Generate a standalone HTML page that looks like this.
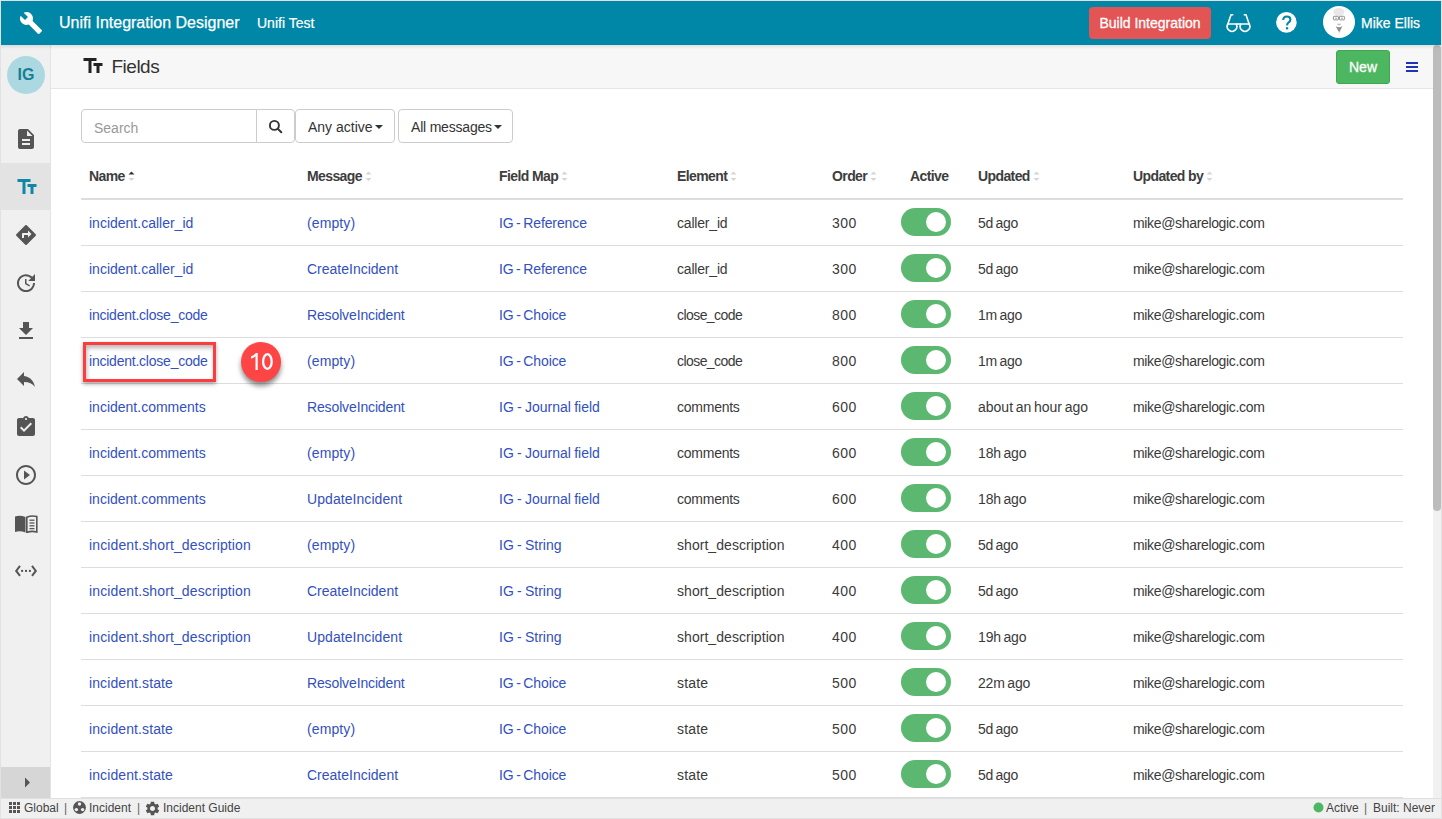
<!DOCTYPE html>
<html><head><meta charset="utf-8">
<style>
*{box-sizing:border-box;margin:0;padding:0}
html,body{width:1442px;height:819px;overflow:hidden;background:#fff}
body{font-family:"Liberation Sans",sans-serif;color:#333;position:relative}
.frame{position:absolute;left:0;top:0;width:1442px;height:819px;border:1px solid #e2e2e2;pointer-events:none;z-index:50}
.topbar{position:absolute;left:0;top:0;width:1442px;height:45px;background:#0086a6;color:#fff}
.topbar .t1{position:absolute;left:59px;top:14px;font-size:16px;line-height:18px;white-space:nowrap;-webkit-text-stroke:0.25px #fff}
.topbar .t2{position:absolute;left:257px;top:15px;font-size:14px;line-height:16px;white-space:nowrap;-webkit-text-stroke:0.2px #fff}
.btn-build{position:absolute;left:1089px;top:7px;width:122px;height:32px;background:#e35454;border-radius:4px;color:#fff;font-size:14px;line-height:32px;text-align:center;-webkit-text-stroke:0.3px #fff}
.uname{position:absolute;left:1361px;top:15px;font-size:14px;line-height:16px;white-space:nowrap;-webkit-text-stroke:0.25px #fff}
.shadow{position:absolute;left:0;top:45px;width:1442px;height:4px;background:linear-gradient(rgba(0,0,0,0.09),rgba(0,0,0,0));z-index:5}
.sidebar{position:absolute;left:0;top:45px;width:51px;height:753px;background:#f0f0f0;border-right:1px solid #e3e3e3}
.sidebar .act{position:absolute;left:0;top:118px;width:50px;height:47px;background:#e3e3e3}
.avatar{position:absolute;left:7px;top:11px;width:38px;height:38px;border-radius:50%;background:#acd9e1;color:#167f94;font-size:16px;font-weight:bold;text-align:center;line-height:38px}
.collapse{position:absolute;left:1px;top:767px;width:49px;height:31px;background:#d6d6d6}
.pagehead{position:absolute;left:51px;top:45px;width:1382px;height:44px;background:#f7f7f7;border-bottom:1px solid #e6e6e6}
.pagehead .title{position:absolute;left:60.5px;top:12px;font-size:19px;line-height:20px;letter-spacing:-0.5px;color:#333}
.btn-new{position:absolute;left:1336px;top:50px;width:54px;height:34px;background:#4cb760;border:1px solid #3da852;border-radius:3px;color:#fff;font-size:14px;line-height:32px;text-align:center;-webkit-text-stroke:0.3px #fff}
.statusbar{position:absolute;left:0;top:798px;width:1442px;height:21px;background:#f0f0f0;border-top:1px solid #e0e0e0;font-size:12px;color:#444}
.scroll{position:absolute;left:1433px;top:45px;width:8px;height:753px;background:#f1f1f1}
.thumb{position:absolute;left:0;top:0;width:8px;height:466px;background:#bcbcbc;border-radius:4px}
.search{position:absolute;left:81px;top:109px;width:176px;height:34px;border:1px solid #ccc;border-radius:4px 0 0 4px;font-size:14px;color:#999;padding-left:12px;line-height:36px}
.sbtn{position:absolute;left:256px;top:109px;width:39px;height:34px;border:1px solid #ccc;border-radius:0 4px 4px 0}
.dd{position:absolute;top:109px;height:34px;border:1px solid #ccc;border-radius:4px;font-size:14px;color:#333;line-height:34px;white-space:nowrap}
.caret{display:inline-block;width:0;height:0;border-left:4px solid transparent;border-right:4px solid transparent;border-top:4px solid #333;vertical-align:middle;margin-left:2px;margin-top:-2px}
table{position:absolute;left:81px;top:151px;width:1322px;border-collapse:collapse;font-size:14px}
th{height:48px;text-align:left;font-weight:bold;font-size:14px;letter-spacing:-0.6px;color:#3d3d3d;border-bottom:2px solid #ddd;padding:3px 0 0 8px;white-space:nowrap}
td{height:46px;border-bottom:1px solid #ddd;padding:1px 0 0 8px;white-space:nowrap;color:#3a3a3a}
td a{color:#3350c0;text-decoration:none}
.sort{display:inline-block;width:7px;height:11px;vertical-align:middle;margin-left:3px;position:relative;top:-1px}
.tog{display:inline-block;width:50px;height:28px;border-radius:14px;background:#5cb870;position:relative;top:-1px;vertical-align:middle}
.tog:after{content:"";position:absolute;right:5px;top:4px;width:20px;height:20px;border-radius:50%;background:#fff}
</style></head><body>
<div class="topbar">
  <div class="t1">Unifi Integration Designer</div>
  <div class="t2">Unifi Test</div>
  <div class="btn-build">Build Integration</div>
  <div class="uname">Mike Ellis</div>
</div>
<div class="shadow"></div>
<div class="sidebar">
  <div class="avatar">IG</div>
  <div class="act"></div>
</div>
<div class="collapse"></div>
<div class="pagehead"><div class="title">Fields</div></div>
<div class="btn-new">New</div>

<div class="search">Search</div>
<div class="sbtn"></div>
<div class="dd" style="left:295px;width:100px;padding-left:12px">Any active<span class="caret"></span></div>
<div class="dd" style="left:398px;width:115px;padding-left:12px;letter-spacing:-0.2px">All messages<span class="caret"></span></div>

<table>
<colgroup><col style="width:218px"><col style="width:192px"><col style="width:178px"><col style="width:155px"><col style="width:69px"><col style="width:77px"><col style="width:155px"><col></colgroup>
<thead><tr><th>Name<svg class="sort" width="7" height="11" viewBox="0 0 7 11"><path d="M0.5 3.5 L3.5 0.5 L6.5 3.5 Z" fill="#333"/><path d="M0.5 7 L3.5 10 L6.5 7 Z" fill="#d5d5d5"/></svg></th><th>Message<svg class="sort" width="7" height="11" viewBox="0 0 7 11"><path d="M0.5 3.5 L3.5 0.5 L6.5 3.5 Z" fill="#d5d5d5"/><path d="M0.5 7 L3.5 10 L6.5 7 Z" fill="#d5d5d5"/></svg></th><th>Field Map<svg class="sort" width="7" height="11" viewBox="0 0 7 11"><path d="M0.5 3.5 L3.5 0.5 L6.5 3.5 Z" fill="#d5d5d5"/><path d="M0.5 7 L3.5 10 L6.5 7 Z" fill="#d5d5d5"/></svg></th><th>Element<svg class="sort" width="7" height="11" viewBox="0 0 7 11"><path d="M0.5 3.5 L3.5 0.5 L6.5 3.5 Z" fill="#d5d5d5"/><path d="M0.5 7 L3.5 10 L6.5 7 Z" fill="#d5d5d5"/></svg></th><th>Order<svg class="sort" width="7" height="11" viewBox="0 0 7 11"><path d="M0.5 3.5 L3.5 0.5 L6.5 3.5 Z" fill="#d5d5d5"/><path d="M0.5 7 L3.5 10 L6.5 7 Z" fill="#d5d5d5"/></svg></th><th style="padding-left:17px">Active</th><th>Updated<svg class="sort" width="7" height="11" viewBox="0 0 7 11"><path d="M0.5 3.5 L3.5 0.5 L6.5 3.5 Z" fill="#d5d5d5"/><path d="M0.5 7 L3.5 10 L6.5 7 Z" fill="#d5d5d5"/></svg></th><th>Updated by<svg class="sort" width="7" height="11" viewBox="0 0 7 11"><path d="M0.5 3.5 L3.5 0.5 L6.5 3.5 Z" fill="#d5d5d5"/><path d="M0.5 7 L3.5 10 L6.5 7 Z" fill="#d5d5d5"/></svg></th></tr></thead>
<tbody>
<tr><td><a>incident.caller_id</a></td><td><a style="letter-spacing:0.100px">(empty)</a></td><td><a style="word-spacing:-1.20px;letter-spacing:-0.115px">IG - Reference</a></td><td><span style="letter-spacing:-0.188px">caller_id</span></td><td><span style="letter-spacing:0.450px">300</span></td><td><span class="tog"></span></td><td><span style="word-spacing:-1.20px;letter-spacing:-0.250px">5d ago</span></td><td><span style="letter-spacing:-0.339px">mike@sharelogic.com</span></td></tr>
<tr><td><a>incident.caller_id</a></td><td><a>CreateIncident</a></td><td><a style="word-spacing:-1.20px;letter-spacing:-0.115px">IG - Reference</a></td><td><span style="letter-spacing:-0.188px">caller_id</span></td><td><span style="letter-spacing:0.450px">300</span></td><td><span class="tog"></span></td><td><span style="word-spacing:-1.20px;letter-spacing:-0.250px">5d ago</span></td><td><span style="letter-spacing:-0.339px">mike@sharelogic.com</span></td></tr>
<tr><td><a style="letter-spacing:-0.228px">incident.close_code</a></td><td><a style="letter-spacing:-0.136px">ResolveIncident</a></td><td><a style="word-spacing:-1.20px;letter-spacing:-0.100px">IG - Choice</a></td><td><span style="letter-spacing:-0.567px">close_code</span></td><td><span style="letter-spacing:0.450px">800</span></td><td><span class="tog"></span></td><td><span style="word-spacing:-1.20px;letter-spacing:-0.250px">1m ago</span></td><td><span style="letter-spacing:-0.339px">mike@sharelogic.com</span></td></tr>
<tr><td><a style="letter-spacing:-0.228px">incident.close_code</a></td><td><a style="letter-spacing:0.100px">(empty)</a></td><td><a style="word-spacing:-1.20px;letter-spacing:-0.100px">IG - Choice</a></td><td><span style="letter-spacing:-0.567px">close_code</span></td><td><span style="letter-spacing:0.450px">800</span></td><td><span class="tog"></span></td><td><span style="word-spacing:-1.20px;letter-spacing:-0.250px">1m ago</span></td><td><span style="letter-spacing:-0.339px">mike@sharelogic.com</span></td></tr>
<tr><td><a>incident.comments</a></td><td><a style="letter-spacing:-0.136px">ResolveIncident</a></td><td><a style="word-spacing:-0.60px">IG - Journal field</a></td><td><span style="letter-spacing:-0.243px">comments</span></td><td><span style="letter-spacing:0.450px">600</span></td><td><span class="tog"></span></td><td><span style="word-spacing:-1.20px">about an hour ago</span></td><td><span style="letter-spacing:-0.339px">mike@sharelogic.com</span></td></tr>
<tr><td><a>incident.comments</a></td><td><a style="letter-spacing:0.100px">(empty)</a></td><td><a style="word-spacing:-0.60px">IG - Journal field</a></td><td><span style="letter-spacing:-0.243px">comments</span></td><td><span style="letter-spacing:0.450px">600</span></td><td><span class="tog"></span></td><td><span style="word-spacing:-1.20px;letter-spacing:-0.150px">18h ago</span></td><td><span style="letter-spacing:-0.339px">mike@sharelogic.com</span></td></tr>
<tr><td><a>incident.comments</a></td><td><a style="letter-spacing:0.069px">UpdateIncident</a></td><td><a style="word-spacing:-0.60px">IG - Journal field</a></td><td><span style="letter-spacing:-0.243px">comments</span></td><td><span style="letter-spacing:0.450px">600</span></td><td><span class="tog"></span></td><td><span style="word-spacing:-1.20px;letter-spacing:-0.150px">18h ago</span></td><td><span style="letter-spacing:-0.339px">mike@sharelogic.com</span></td></tr>
<tr><td><a style="letter-spacing:0.120px">incident.short_description</a></td><td><a style="letter-spacing:0.100px">(empty)</a></td><td><a style="word-spacing:-0.65px">IG - String</a></td><td><span style="letter-spacing:0.050px">short_description</span></td><td><span style="letter-spacing:0.450px">400</span></td><td><span class="tog"></span></td><td><span style="word-spacing:-1.20px;letter-spacing:-0.250px">5d ago</span></td><td><span style="letter-spacing:-0.339px">mike@sharelogic.com</span></td></tr>
<tr><td><a style="letter-spacing:0.120px">incident.short_description</a></td><td><a>CreateIncident</a></td><td><a style="word-spacing:-0.65px">IG - String</a></td><td><span style="letter-spacing:0.050px">short_description</span></td><td><span style="letter-spacing:0.450px">400</span></td><td><span class="tog"></span></td><td><span style="word-spacing:-1.20px;letter-spacing:-0.250px">5d ago</span></td><td><span style="letter-spacing:-0.339px">mike@sharelogic.com</span></td></tr>
<tr><td><a style="letter-spacing:0.120px">incident.short_description</a></td><td><a style="letter-spacing:0.069px">UpdateIncident</a></td><td><a style="word-spacing:-0.65px">IG - String</a></td><td><span style="letter-spacing:0.050px">short_description</span></td><td><span style="letter-spacing:0.450px">400</span></td><td><span class="tog"></span></td><td><span style="word-spacing:-1.20px;letter-spacing:-0.150px">19h ago</span></td><td><span style="letter-spacing:-0.339px">mike@sharelogic.com</span></td></tr>
<tr><td><a style="letter-spacing:0.108px">incident.state</a></td><td><a style="letter-spacing:-0.136px">ResolveIncident</a></td><td><a style="word-spacing:-1.20px;letter-spacing:-0.100px">IG - Choice</a></td><td><span style="letter-spacing:0.175px">state</span></td><td><span style="letter-spacing:0.450px">500</span></td><td><span class="tog"></span></td><td><span style="word-spacing:-1.20px;letter-spacing:-0.167px">22m ago</span></td><td><span style="letter-spacing:-0.339px">mike@sharelogic.com</span></td></tr>
<tr><td><a style="letter-spacing:0.108px">incident.state</a></td><td><a style="letter-spacing:0.100px">(empty)</a></td><td><a style="word-spacing:-1.20px;letter-spacing:-0.100px">IG - Choice</a></td><td><span style="letter-spacing:0.175px">state</span></td><td><span style="letter-spacing:0.450px">500</span></td><td><span class="tog"></span></td><td><span style="word-spacing:-1.20px;letter-spacing:-0.250px">5d ago</span></td><td><span style="letter-spacing:-0.339px">mike@sharelogic.com</span></td></tr>
<tr><td><a style="letter-spacing:0.108px">incident.state</a></td><td><a>CreateIncident</a></td><td><a style="word-spacing:-1.20px;letter-spacing:-0.100px">IG - Choice</a></td><td><span style="letter-spacing:0.175px">state</span></td><td><span style="letter-spacing:0.450px">500</span></td><td><span class="tog"></span></td><td><span style="word-spacing:-1.20px;letter-spacing:-0.250px">5d ago</span></td><td><span style="letter-spacing:-0.339px">mike@sharelogic.com</span></td></tr>
</tbody>
</table>

<div class="scroll"><div class="thumb"></div></div>
<div class="statusbar">
<svg style="position:absolute;left:9px;top:3px" width="11" height="11" viewBox="0 0 11 11"><g fill="#555"><rect x="0" y="0" width="3" height="3"/><rect x="4" y="0" width="3" height="3"/><rect x="8" y="0" width="3" height="3"/><rect x="0" y="4" width="3" height="3"/><rect x="4" y="4" width="3" height="3"/><rect x="8" y="4" width="3" height="3"/><rect x="0" y="8" width="3" height="3"/><rect x="4" y="8" width="3" height="3"/><rect x="8" y="8" width="3" height="3"/></g></svg>
<span style="position:absolute;left:24px;top:2px;line-height:14px">Global</span>
<span style="position:absolute;left:64px;top:2px;line-height:14px;color:#666">|</span>
<svg style="position:absolute;left:73px;top:2px" width="13" height="13" viewBox="0 0 13 13"><circle cx="6.5" cy="6.5" r="6.4" fill="#555"/><circle cx="6.5" cy="3" r="1.7" fill="#f0f0f0"/><circle cx="3.4" cy="8.6" r="1.7" fill="#f0f0f0"/><circle cx="9.6" cy="8.6" r="1.7" fill="#f0f0f0"/></svg>
<span style="position:absolute;left:89px;top:2px;line-height:14px">Incident</span>
<span style="position:absolute;left:137px;top:2px;line-height:14px;color:#666">|</span>
<svg style="position:absolute;left:143.5px;top:1px" width="17" height="17" viewBox="0 0 24 24"><path fill="#555" d="M19.14 12.94c.04-.3.06-.61.06-.94 0-.32-.02-.64-.07-.94l2.03-1.58c.18-.14.23-.41.12-.61l-1.92-3.32c-.12-.22-.37-.29-.59-.22l-2.39.96c-.5-.38-1.03-.7-1.62-.94l-.36-2.54c-.04-.24-.24-.41-.48-.41h-3.84c-.24 0-.43.17-.47.41l-.36 2.54c-.59.24-1.13.57-1.62.94l-2.39-.96c-.22-.08-.47 0-.59.22L2.74 8.87c-.12.21-.08.47.12.61l2.03 1.58c-.05.3-.09.63-.09.94s.02.64.07.94l-2.03 1.58c-.18.14-.23.41-.12.61l1.92 3.32c.12.22.37.29.59.22l2.39-.96c.5.38 1.03.7 1.62.94l.36 2.54c.05.24.24.41.48.41h3.84c.24 0 .44-.17.47-.41l.36-2.54c.59-.24 1.13-.56 1.62-.94l2.39.96c.22.08.47 0 .59-.22l1.92-3.320c.12-.22.07-.47-.12-.61l-2.01-1.58zM12 15.6c-1.98 0-3.6-1.62-3.6-3.6s1.62-3.6 3.6-3.6 3.6 1.62 3.6 3.6-1.62 3.6-3.6 3.6z"/></svg>
<span style="position:absolute;left:163px;top:2px;line-height:14px">Incident Guide</span>
<svg style="position:absolute;left:1313px;top:3px" width="11" height="11" viewBox="0 0 11 11"><circle cx="5.5" cy="5.5" r="5" fill="#4cb862"/></svg>
<span style="position:absolute;left:1326px;top:2px;line-height:14px">Active</span>
<span style="position:absolute;left:1364px;top:2px;line-height:14px;color:#666">|</span>
<span style="position:absolute;left:1373px;top:2px;line-height:14px">Built: Never</span>
</div>
<svg style="position:absolute;left:19px;top:10.5px;z-index:20" width="24" height="24" viewBox="0 0 24 24"><path fill="#fff" d="M22.7 19l-9.1-9.1c.9-2.3.4-5-1.5-6.9-2-2-5-2.4-7.4-1.3L9 6 6 9 1.6 4.7C.4 7.1.9 10.1 2.9 12.1c1.9 1.9 4.6 2.4 6.9 1.5l9.1 9.1c.4.4 1 .4 1.4 0l2.3-2.3c.5-.4.5-1.1.1-1.4z"/></svg>
<svg style="position:absolute;left:1276px;top:12px;z-index:20" width="21" height="21" viewBox="0 0 21 21"><circle cx="10.4" cy="10.4" r="10.3" fill="#fff"/><path d="M7.2 8.1 Q7.2 4.5 10.8 4.5 Q14.4 4.5 14.4 7.6 Q14.4 9.5 12.4 10.7 Q11.1 11.5 11.1 13.6" fill="none" stroke="#0086a6" stroke-width="2.1"/><rect x="9.9" y="15.2" width="2.3" height="2.2" fill="#0086a6"/></svg>
<svg style="position:absolute;left:1225px;top:13px;z-index:20" width="27" height="21" viewBox="0 0 27 21"><g fill="none" stroke="#fff" stroke-width="1.6" stroke-linejoin="round"><path d="M2.9 11 H11.1 A4.8 4.8 0 1 1 2.9 11 Z"/><path d="M15.9 11 H24.1 A4.8 4.8 0 1 1 15.9 11 Z"/><path d="M11.1 11 H15.9"/><path d="M2.7 11.5 L6 1.8 H8.3"/><path d="M24.3 11.5 L21 1.8 H18.7"/></g></svg>
<svg style="position:absolute;left:1323px;top:6px;z-index:20" width="32" height="32" viewBox="0 0 32 32"><circle cx="16" cy="16" r="16" fill="#fff"/><ellipse cx="15.8" cy="6" rx="5.6" ry="4" fill="#e8e8e8"/><g fill="none" stroke="#7a7a7a" stroke-width="0.8"><rect x="10.4" y="10.3" width="5" height="3.6" rx="0.6"/><rect x="16.4" y="10.3" width="5" height="3.6" rx="0.6"/></g><circle cx="13" cy="12.2" r="0.6" fill="#666"/><circle cx="19" cy="12.2" r="0.6" fill="#666"/><path d="M13.8 17.8 H18.2 L17 19.3 H15 Z" fill="#bdbdbd"/><path d="M12.6 20.3 Q16 22.2 19.4 20.3 L16.2 26.5 Z" fill="#8f8f8f"/><path d="M15.5 26 L16.5 26 L16.2 30 Z" fill="#e0e0e0"/></svg>
<svg style="position:absolute;left:80.8px;top:54px;z-index:20" width="24" height="24" viewBox="0 0 24 24"><path fill="#222" d="M2.5 4v3h5v12h3V7h5V4h-13zm19 5h-9v3h3v7h3v-7h3V9z"/></svg>
<svg style="position:absolute;left:14px;top:127px;z-index:20" width="24" height="24" viewBox="0 0 24 24"><path fill="#555555" d="M14 2H6c-1.1 0-1.99.9-1.99 2L4 20c0 1.1.89 2 1.99 2H18c1.1 0 2-.9 2-2V8l-6-6zm2 16H8v-2h8v2zm0-4H8v-2h8v2zm-3-5V3.5L18.5 9H13z"/></svg>
<svg style="position:absolute;left:14.5px;top:175px;z-index:20" width="24" height="24" viewBox="0 0 24 24"><path fill="#0e88a5" d="M2.5 4v3h5v12h3V7h5V4h-13zm19 5h-9v3h3v7h3v-7h3V9z"/></svg>
<svg style="position:absolute;left:14px;top:223px;z-index:20" width="24" height="24" viewBox="0 0 24 24"><path fill="#555555" d="M21.71 11.29l-9-9c-.39-.39-1.02-.39-1.41 0l-9 9c-.39.39-.39 1.020 0 1.41l9 9c.39.39 1.02.39 1.41 0l9-9c.39-.38.39-1.01 0-1.41zM14 14.5V12h-4v3H8v-4c0-.55.45-1 1-1h5V7.5l3.5 3.5-3.5 3.5z"/></svg>
<svg style="position:absolute;left:14px;top:270.7px;z-index:20" width="24" height="24" viewBox="0 0 24 24"><path fill="#555555" d="M21 10.12h-6.78l2.74-2.82c-2.73-2.7-7.15-2.8-9.88-.1-2.73 2.71-2.73 7.08 0 9.79s7.15 2.71 9.88 0C18.32 15.65 19 14.08 19 12.1h2c0 1.98-.88 4.550-2.64 6.29-3.51 3.48-9.21 3.48-12.72 0-3.5-3.47-3.53-9.11-.02-12.58s9.14-3.47 12.65 0L21 3v7.12zM12.5 8v4.25l3.5 2.08-.72 1.21L11 13V8h1.5z"/></svg>
<svg style="position:absolute;left:14px;top:319px;z-index:20" width="24" height="24" viewBox="0 0 24 24"><path fill="#555555" d="M19 9h-4V3H9v6H5l7 7 7-7zM5 18v2h14v-2H5z"/></svg>
<svg style="position:absolute;left:14.4px;top:367px;z-index:20" width="24" height="24" viewBox="0 0 24 24"><path fill="#555555" d="M10 9V5l-7 7 7 7v-4.1c5 0 8.5 1.6 11 5.1-1-5-4-10-11-11z"/></svg>
<svg style="position:absolute;left:13.7px;top:414.8px;z-index:20" width="24" height="24" viewBox="0 0 24 24"><path fill="#555555" d="M19 3h-4.18C14.4 1.84 13.3 1 12 1c-1.3 0-2.4.84-2.82 2H5c-1.1 0-2 .9-2 2v14c0 1.1.9 2 2 2h14c1.1 0 2-.9 2-2V5c0-1.1-.9-2-2-2zm-7 0c.55 0 1 .45 1 1s-.45 1-1 1-1-.45-1-1 .45-1 1-1zm-2 14l-4-4 1.41-1.41L10 14.17l6.59-6.59L18 9l-8 8z"/></svg>
<svg style="position:absolute;left:14px;top:463px;z-index:20" width="24" height="24" viewBox="0 0 24 24"><path fill="#555555" d="M10 16.5l6-4.5-6-4.5v9zM12 2C6.48 2 2 6.48 2 12s4.48 10 10 10 10-4.48 10-10S17.52 2 12 2zm0 18c-4.41 0-8-3.59-8-8s3.59-8 8-8 8 3.59 8 8-3.59 8-8 8z"/></svg>
<svg style="position:absolute;left:14px;top:515px;z-index:20" width="24" height="18" viewBox="0 0 24 18"><path d="M1 1.5 Q6 0 11.5 2 V17.5 Q6 15.5 1 17 Z" fill="#555"/><path d="M12.8 2.2 Q17.5 0.2 22.8 1.5 V17 Q17.5 15.5 12.8 17.5 Z" fill="none" stroke="#555" stroke-width="1.6"/><g stroke="#555" stroke-width="1.3"><path d="M15.5 5.2 H20.5"/><path d="M15.5 8 H20.5"/><path d="M15.5 10.8 H20.5"/><path d="M15.5 13.6 H20.5"/></g></svg>
<svg style="position:absolute;left:14px;top:564px;z-index:20" width="24" height="14" viewBox="0 0 24 14"><g fill="none" stroke="#555" stroke-width="2"><path d="M6 1.9 L2.2 6.9 L6 11.9"/><path d="M18 1.9 L21.8 6.9 L18 11.9"/></g><g fill="#555"><rect x="7.1" y="5.9" width="2" height="2"/><rect x="11" y="5.9" width="2" height="2"/><rect x="14.9" y="5.9" width="2" height="2"/></g></svg>
<svg style="position:absolute;left:24px;top:777px;z-index:20" width="7" height="11" viewBox="0 0 7 11"><path d="M1 0.5 L6 5.5 L1 10.5 Z" fill="#555"/></svg>
<svg style="position:absolute;left:1406px;top:61px;z-index:20" width="12" height="11" viewBox="0 0 12 11"><g fill="#1f33b3"><rect x="0" y="1" width="12" height="2"/><rect x="0" y="5" width="12" height="2"/><rect x="0" y="9" width="12" height="2"/></g></svg>
<svg style="position:absolute;left:268px;top:119px;z-index:20" width="15" height="15" viewBox="0 0 15 15"><circle cx="6.4" cy="6.4" r="4.5" fill="none" stroke="#333" stroke-width="1.9"/><path d="M9.6 9.6 L13.3 13.3" stroke="#333" stroke-width="2" stroke-linecap="round"/></svg>
<div style="position:absolute;left:83px;top:342px;width:133px;height:40px;border:3px solid #fc3c3f;box-shadow:0 2px 4px rgba(0,0,0,0.35), inset 1px 3px 4px rgba(0,0,0,0.28);z-index:30"></div>
<div style="position:absolute;left:241px;top:342px;width:40px;height:40px;border-radius:50%;background:#fd4545;box-shadow:0 4px 5px rgba(0,0,0,0.45);z-index:30"><svg style="position:absolute;left:0;top:0" width="40" height="40" viewBox="0 0 40 40"><path d="M14.9 11 H16.7 V28 H14.5 V14.3 Q12.5 16 10 16.8 V14.6 Q13 13.4 14.9 11 Z" fill="#fff"/><ellipse cx="26.4" cy="19.5" rx="4.3" ry="7.3" fill="none" stroke="#fff" stroke-width="2.3"/></svg></div>
<div class="frame"></div>
</body></html>
